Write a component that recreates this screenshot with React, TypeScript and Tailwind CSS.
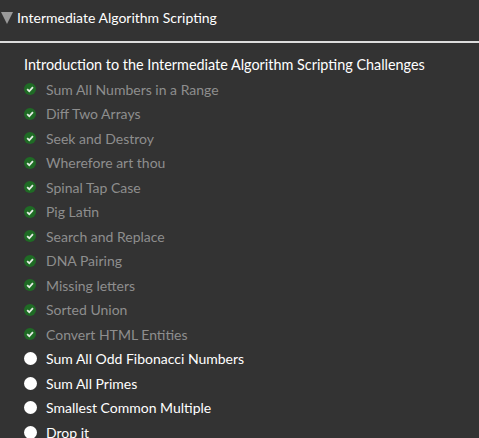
const done = [
  'Sum All Numbers in a Range',
  'Diff Two Arrays',
  'Seek and Destroy',
  'Wherefore art thou',
  'Spinal Tap Case',
  'Pig Latin',
  'Search and Replace',
  'DNA Pairing',
  'Missing letters',
  'Sorted Union',
  'Convert HTML Entities',
];

const todo = ['Sum All Odd Fibonacci Numbers', 'Sum All Primes', 'Smallest Common Multiple', 'Drop it'];

function CheckIcon() {
  return (
    <svg width="12" height="12" viewBox="0 0 16 16" className="shrink-0">
      <circle cx="8" cy="8" r="8" fill="#1f6b25" />
      <path d="M4.2 8.3 L7 11 L11.9 5.4" stroke="#e4ece4" strokeWidth="2.4" fill="none" />
    </svg>
  );
}

export default function App() {
  return (
    <div className="w-[479px] h-[438px] overflow-hidden bg-[#333333] font-['Lato',sans-serif]">
      <div className="flex items-center h-[35px] pl-[1px] text-[14px] text-white">
        <svg width="12" height="12" viewBox="0 0 12 12" className="mr-[4px] mt-[1px]">
          <polygon points="0,0 12,0 6,12" fill="#9a9a9a" />
        </svg>
        Intermediate Algorithm Scripting
      </div>
      <div className="mt-[6px] h-[2px] bg-[#dddddd]" />
      <div className="pl-[24px] pt-[12px]">
        <div className="text-[14.4px] text-white leading-[20px] mb-[2px]">
          Introduction to the Intermediate Algorithm Scripting Challenges
        </div>
        <ul className="flex flex-col">
          {done.map((t) => (
            <li key={t} className="flex items-center h-[24.5px] text-[14px] text-[#8e8e8e]">
              <span className="w-[22px] flex"><CheckIcon /></span>
              {t}
            </li>
          ))}
          {todo.map((t) => (
            <li key={t} className="flex items-center h-[24.5px] text-[14px] text-white">
              <span className="w-[22px] flex">
                <span className="w-[13px] h-[13px] rounded-full bg-white" />
              </span>
              {t}
            </li>
          ))}
        </ul>
      </div>
    </div>
  );
}
